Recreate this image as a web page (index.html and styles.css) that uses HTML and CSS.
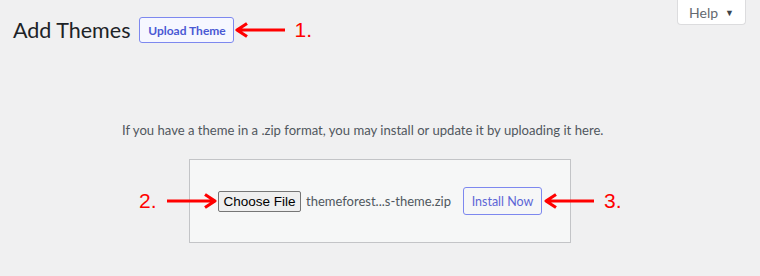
FILE: index.html
```html
<!DOCTYPE html>
<html lang="en">
<head>
<meta charset="utf-8">
<title>Add Themes</title>
<link rel="stylesheet" href="styles.css">
</head>
<body>
<div class="wrap">
  <div class="top">
    <div class="title-row">
      <h1 class="page-title">Add Themes</h1>
      <button class="btn-outline btn-upload" type="button">Upload Theme</button>
      <span class="note note-inline">
        <svg class="arrow" width="52" height="16" viewBox="0 0 52 16"><path d="M51 8H3M13 1.5L3 8l10 6.5" fill="none" stroke="#f00" stroke-width="3.2" stroke-linejoin="round"/></svg>
        <span class="note-num">1.</span>
      </span>
    </div>
    <div class="help-tab">Help <span class="help-caret">&#9660;</span></div>
  </div>

  <p class="install-help">If you have a theme in a .zip format, you may install or update it by uploading it here.</p>

  <form class="upload-form">
    <div class="file-field">
      <button class="file-btn" type="button">Choose File</button>
      <span class="file-name">themeforest...s-theme.zip</span>
    </div>
    <button class="btn-outline btn-install" type="button">Install Now</button>

    <span class="note note-2">
      <span class="note-num">2.</span>
      <svg class="arrow" width="52" height="16" viewBox="0 0 52 16"><path d="M1 8h48M39 1.5L49 8l-10 6.5" fill="none" stroke="#f00" stroke-width="3.2" stroke-linejoin="round"/></svg>
    </span>
    <span class="note note-3">
      <svg class="arrow" width="52" height="16" viewBox="0 0 52 16"><path d="M51 8H3M13 1.5L3 8l10 6.5" fill="none" stroke="#f00" stroke-width="3.2" stroke-linejoin="round"/></svg>
      <span class="note-num">3.</span>
    </span>
  </form>
</div>
</body>
</html>
```

FILE: styles.css
```css
* { box-sizing: border-box; }

html, body {
  margin: 0;
  padding: 0;
  background: #f0f0f1;
}

body {
  font-family: Lato, "Open Sans", "Liberation Sans", sans-serif;
  color: #3c434a;
  width: 760px;
  height: 276px;
  overflow: hidden;
}

.top {
  display: flex;
  justify-content: space-between;
  align-items: flex-start;
  padding: 0 14px 0 13px;
}

.title-row {
  display: flex;
  align-items: center;
  padding-top: 17px;
}

.page-title {
  margin: 0 9px 0 0;
  font-size: 21.5px;
  font-weight: 400;
  line-height: 26px;
  color: #1d2327;
}

.btn-outline {
  font-family: inherit;
  background: #f6f7f7;
  border: 1px solid #7d88ef;
  border-radius: 3px;
  color: #4a59d4;
  cursor: pointer;
  margin: 0;
}

.btn-upload {
  width: 95px;
  height: 26px;
  padding: 0;
  font-size: 12px;
  font-weight: 700;
  background: #f6f7ff;
}

.note {
  display: flex;
  align-items: center;
  color: #f00;
}

.arrow { display: block; }

.note-num {
  font-family: "Liberation Sans", Arial, sans-serif;
  font-size: 21px;
  line-height: 24px;
  color: #f00;
}

.note-inline .note-num { margin-left: 8px; }

.help-tab {
  width: 69px;
  height: 25px;
  background: #fff;
  border: 1px solid #dcdcde;
  border-top: none;
  border-radius: 0 0 4px 4px;
  display: flex;
  align-items: center;
  justify-content: center;
  gap: 7px;
  font-size: 14px;
  color: #646970;
}

.help-caret {
  font-size: 9px;
  color: #3c434a;
}

.install-help {
  margin: 77px 0 0 122px;
  font-size: 13.1px;
  line-height: 20px;
  color: #50575e;
}

.upload-form {
  position: relative;
  width: 382px;
  height: 84px;
  margin: 19px auto 0;
  background: #f6f7f7;
  border: 1px solid #c3c4c7;
  display: flex;
  align-items: center;
  padding-left: 28px;
}

.file-field {
  display: flex;
  align-items: center;
  gap: 5px;
}

.file-btn {
  height: 21px;
  width: 83px;
  padding: 0;
  font-family: "Liberation Sans", Arial, sans-serif;
  font-size: 13.5px;
  color: #000;
  background: #efefef;
  border: 1px solid #767676;
  border-radius: 2px;
}

.file-name {
  width: 143px;
  white-space: nowrap;
  font-size: 13px;
  color: #50575e;
}

.btn-install {
  margin-left: 14px;
  width: 79px;
  height: 28px;
  padding: 0;
  font-size: 12.5px;
  font-weight: 400;
  color: #5c66d6;
  background: #f6f7f7;
}

.note-2 {
  position: absolute;
  left: -51px;
  top: 29px;
  gap: 9px;
}

.note-3 {
  position: absolute;
  left: 353px;
  top: 29px;
}

.note-3 .note-num { margin-left: 9px; }
```
